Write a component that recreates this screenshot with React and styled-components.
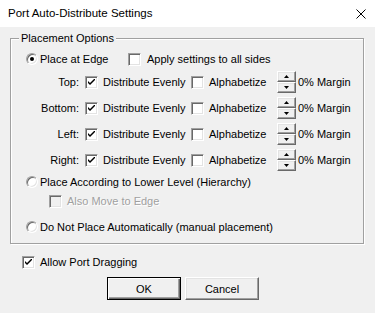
import React from 'react'
import styled, { createGlobalStyle } from 'styled-components'

const GlobalStyle = createGlobalStyle`
  html, body {
    margin: 0;
    padding: 0;
    background: #f0f0f0;
  }
  body {
    font-family: "Liberation Sans", Arial, sans-serif;
    font-size: 11px;
    color: #000;
  }
`

const Window = styled.div`
  width: 375px;
  height: 313px;
  background: #f0f0f0;
  overflow: hidden;
`

const TitleBar = styled.div`
  height: 27px;
  background: #fff;
  display: flex;
  align-items: center;
  justify-content: space-between;
  padding: 0 9px 0 8px;

  .title {
    font-size: 11.5px;
    color: #000;
    margin-top: -2px;
  }
`

const Body = styled.div`
  padding: 5px 10px 0 10px;
`

const GroupBox = styled.fieldset`
  margin: 0;
  width: 354px;
  box-sizing: border-box;
  padding: 6px 0 8px 15px;
  border: 1px solid #a0a0a0;
  box-shadow: 1px 1px 0 #fff, inset 1px 1px 0 #fff;

  legend {
    margin-left: -7px;
    padding: 0 2px;
    line-height: 13px;
    background: #f0f0f0;
  }
`

const Row = styled.div`
  display: flex;
  align-items: center;
  height: ${p => p.$h || 16}px;
  margin-top: ${p => p.$mt || 0}px;
  margin-left: ${p => p.$indent || 0}px;
`

const Item = styled.div`
  display: flex;
  align-items: center;
  gap: ${p => p.$gap ?? 5}px;
  width: ${p => (p.$w ? `${p.$w}px` : 'auto')};
  flex-shrink: 0;
  color: ${p => (p.$disabled ? '#a0a0a0' : '#000')};
  text-shadow: ${p => (p.$disabled ? '1px 1px 0 #fff' : 'none')};
  white-space: nowrap;
`

const SideLabel = styled.span`
  width: 53px;
  text-align: right;
  margin-right: 6px;
  flex-shrink: 0;
`

const Box = styled.span`
  box-sizing: border-box;
  width: 13px;
  height: 13px;
  flex-shrink: 0;
  background: ${p => (p.$disabled ? '#f0f0f0' : '#fff')};
  border: 1px solid;
  border-color: #a0a0a0 #fff #fff #a0a0a0;
  box-shadow: inset 1px 1px 0 #696969, inset -1px -1px 0 #e3e3e3;
  display: flex;
  align-items: center;
  justify-content: center;
`

const RadioDot = styled.span`
  box-sizing: border-box;
  width: 12px;
  height: 12px;
  border-radius: 50%;
  flex-shrink: 0;
  background: #fff;
  border: 1px solid;
  border-color: #a0a0a0 #fff #fff #a0a0a0;
  box-shadow: inset 1px 1px 0 #696969, inset -1px -1px 0 #e3e3e3;
  display: flex;
  align-items: center;
  justify-content: center;

  &::after {
    content: '';
    width: 4px;
    height: 4px;
    border-radius: 50%;
    background: ${p => (p.$on ? '#000' : 'transparent')};
  }
`

const Spinner = styled.div`
  display: flex;
  flex-direction: column;
  width: 19px;
  margin-right: 2px;
  flex-shrink: 0;
`

const SpinButton = styled.span`
  box-sizing: border-box;
  height: 11px;
  background: #f0f0f0;
  border: 1px solid;
  border-color: #fff #696969 #696969 #fff;
  box-shadow: inset -1px -1px 0 #a0a0a0, inset 1px 1px 0 #e3e3e3;
  display: flex;
  align-items: center;
  justify-content: center;
`

const ButtonRow = styled.div`
  display: flex;
  gap: 4px;
  margin: 7px 0 0 97px;
`

const Button = styled.button`
  box-sizing: border-box;
  width: 74px;
  height: 23px;
  padding: 0;
  font-family: "Liberation Sans", Arial, sans-serif;
  font-size: 11px;
  color: #000;
  background: #f0f0f0;
  border: 1px solid;
  border-color: ${p => (p.$default ? '#000' : '#fff #696969 #696969 #fff')};
  box-shadow: ${p =>
    p.$default
      ? 'inset 1px 1px 0 #fff, inset -1px -1px 0 #696969, inset -2px -2px 0 #a0a0a0'
      : 'inset -1px -1px 0 #a0a0a0, inset 1px 1px 0 #e3e3e3'};
`

function Check({ on, disabled }) {
  return (
    <Box $disabled={disabled}>
      {on && (
        <svg width="7" height="7" viewBox="0 0 7 7">
          <path d="M0 2 L0 4 L2 6 L7 1 L7 -1 L2 4 Z" fill="#000" />
        </svg>
      )}
    </Box>
  )
}

function Arrow({ down }) {
  return (
    <svg width="5" height="3" viewBox="0 0 5 3">
      <path d={down ? 'M0 0 H5 L2.5 3 Z' : 'M0 3 H5 L2.5 0 Z'} fill="#000" />
    </svg>
  )
}

const sides = ['Top:', 'Bottom:', 'Left:', 'Right:']

export default function App() {
  return (
    <Window>
      <GlobalStyle />
      <TitleBar>
        <span className="title">Port Auto-Distribute Settings</span>
        <svg width="10" height="10" viewBox="0 0 10 10">
          <path d="M0.5 0.5 L9.5 9.5 M9.5 0.5 L0.5 9.5" stroke="#000" strokeWidth="1" />
        </svg>
      </TitleBar>
      <Body>
        <GroupBox>
          <legend>Placement Options</legend>
          <Row>
            <Item $w={102} $gap={2}>
              <RadioDot $on />
              <span>Place at Edge</span>
            </Item>
            <Item $gap={6}>
              <Check />
              <span>Apply settings to all sides</span>
            </Item>
          </Row>
          {sides.map(s => (
            <Row key={s} $h={22} $mt={4}>
              <SideLabel>{s}</SideLabel>
              <Item $w={106}>
                <Check on />
                <span>Distribute Evenly</span>
              </Item>
              <Item $w={86}>
                <Check />
                <span>Alphabetize</span>
              </Item>
              <Spinner>
                <SpinButton><Arrow /></SpinButton>
                <SpinButton><Arrow down /></SpinButton>
              </Spinner>
              <span>0% Margin</span>
            </Row>
          ))}
          <Row $mt={3}>
            <Item $gap={2}>
              <RadioDot />
              <span>Place According to Lower Level (Hierarchy)</span>
            </Item>
          </Row>
          <Row $mt={3} $indent={23}>
            <Item $disabled>
              <Check disabled />
              <span>Also Move to Edge</span>
            </Item>
          </Row>
          <Row $mt={10}>
            <Item $gap={2}>
              <RadioDot />
              <span>Do Not Place Automatically (manual placement)</span>
            </Item>
          </Row>
        </GroupBox>
        <Row $mt={10} $indent={12}>
          <Item $gap={5}>
            <Check on />
            <span>Allow Port Dragging</span>
          </Item>
        </Row>
        <ButtonRow>
          <Button $default>OK</Button>
          <Button>Cancel</Button>
        </ButtonRow>
      </Body>
    </Window>
  )
}
